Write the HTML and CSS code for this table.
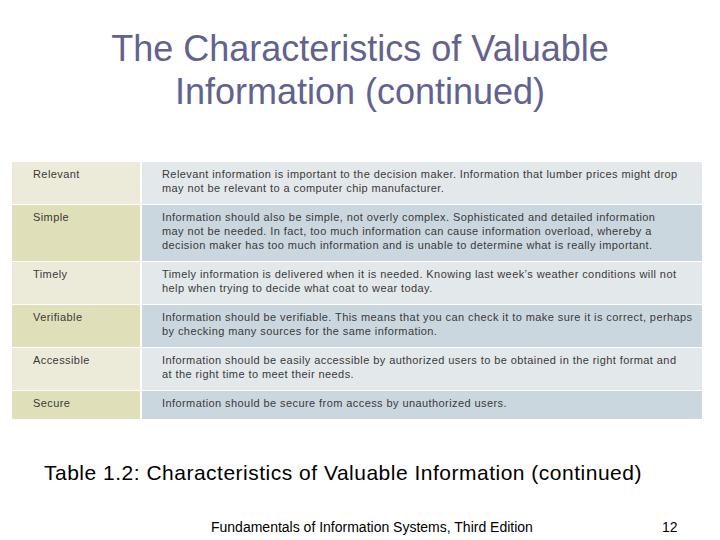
FILE: index.html
```html
<!DOCTYPE html>
<html>
<head>
<meta charset="utf-8">
<link rel="stylesheet" href="styles.css">
</head>
<body>
<div class="slide">
  <h1 class="title">The Characteristics of Valuable<br>Information (continued)</h1>
  <div class="table">
    <div class="term odd">Relevant</div>
    <div class="desc odd">Relevant information is important to the decision maker. Information that lumber prices might drop<br>may not be relevant to a computer chip manufacturer.</div>
    <div class="term even">Simple</div>
    <div class="desc even">Information should also be simple, not overly complex. Sophisticated and detailed information<br>may not be needed. In fact, too much information can cause information overload, whereby a<br>decision maker has too much information and is unable to determine what is really important.</div>
    <div class="term odd">Timely</div>
    <div class="desc odd">Timely information is delivered when it is needed. Knowing last week’s weather conditions will not<br>help when trying to decide what coat to wear today.</div>
    <div class="term even">Verifiable</div>
    <div class="desc even">Information should be verifiable. This means that you can check it to make sure it is correct, perhaps<br>by checking many sources for the same information.</div>
    <div class="term odd">Accessible</div>
    <div class="desc odd">Information should be easily accessible by authorized users to be obtained in the right format and<br>at the right time to meet their needs.</div>
    <div class="term even">Secure</div>
    <div class="desc even">Information should be secure from access by unauthorized users.</div>
  </div>
  <div class="caption">Table 1.2: Characteristics of Valuable Information (continued)</div>
  <div class="footer">
    <span class="foot-text">Fundamentals of Information Systems, Third Edition</span>
    <span class="page-num">12</span>
  </div>
</div>
</body>
</html>
```
FILE: styles.css
```css
html, body {
  margin: 0;
  padding: 0;
  background: #ffffff;
}
.slide {
  width: 720px;
  height: 540px;
  overflow: hidden;
  font-family: "Liberation Sans", Arial, sans-serif;
}
.title {
  margin: 0;
  padding-top: 27px;
  font-size: 36px;
  line-height: 43px;
  font-weight: normal;
  text-align: center;
  color: #62628f;
}
.table {
  margin: 49px 0 0 12px;
  width: 690px;
  display: grid;
  grid-template-columns: 128px 1fr;
  column-gap: 2px;
  row-gap: 1px;
  background: #ffffff;
  font-size: 11px;
  line-height: 14px;
  letter-spacing: 0.42px;
  color: #3a3a3a;
}
.term, .desc {
  padding: 5px 0 9px 21px;
  white-space: nowrap;
}
.desc {
  padding-left: 20px;
}
.term.odd { background: #ecebd9; }
.term.even { background: #dfdfba; }
.desc.odd { background: #e3e8ea; }
.desc.even { background: #cbd7de; }
.caption {
  margin: 42px 0 0 44px;
  font-size: 21px;
  line-height: 24px;
  letter-spacing: 0.5px;
  color: #000000;
}
.footer {
  margin-top: 34px;
  display: flex;
  font-size: 14px;
  line-height: 16px;
  color: #000000;
}
.foot-text {
  margin-left: 211px;
}
.page-num {
  margin-left: 129px;
}
```
